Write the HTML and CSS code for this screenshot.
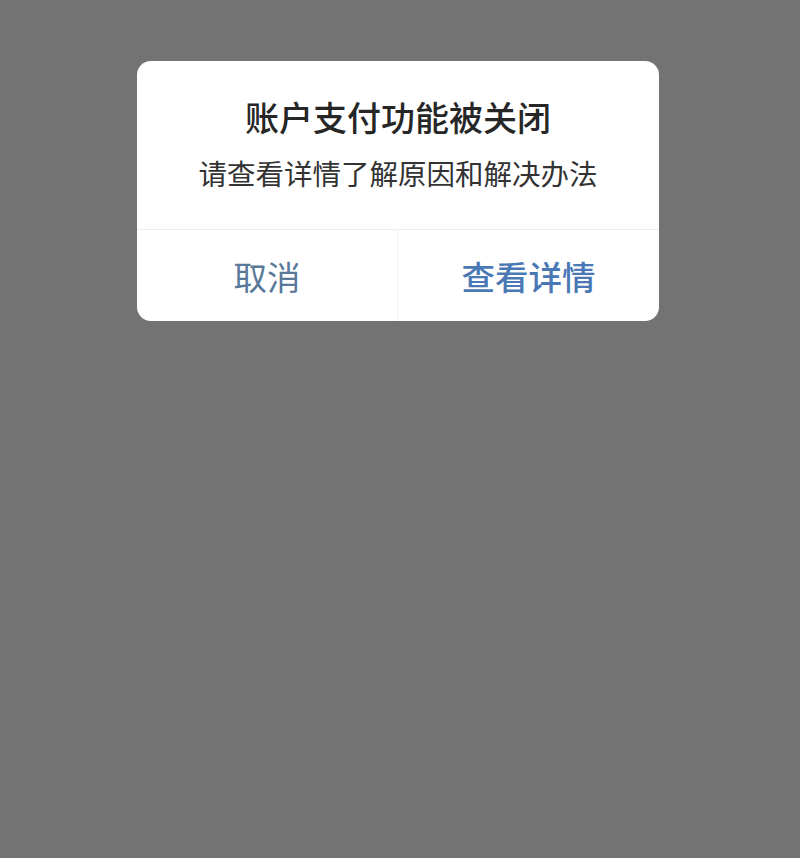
FILE: index.html
```html
<!DOCTYPE html>
<html lang="zh-CN">
<head>
<meta charset="utf-8">
<title>账户支付功能被关闭</title>
<link rel="stylesheet" href="styles.css">
</head>
<body>
<div class="screen">
  <div class="dialog">
    <div class="dialog-body">
      <h1 class="dialog-title">账户支付功能被关闭</h1>
      <p class="dialog-text">请查看详情了解原因和解决办法</p>
    </div>
    <div class="dialog-actions">
      <button class="btn btn-cancel">取消</button>
      <button class="btn btn-primary">查看详情</button>
    </div>
  </div>
</div>
</body>
</html>
```
FILE: styles.css
```css
html, body {
  margin: 0;
  padding: 0;
  background: #737373;
}
body {
  font-family: "Noto Sans CJK SC", "Noto Sans", sans-serif;
}
.screen {
  width: 800px;
  height: 858px;
  display: flex;
  flex-direction: column;
  align-items: center;
  padding-top: 61px;
  box-sizing: border-box;
}
.dialog {
  width: 522px;
  margin-left: -4px;
  background: #ffffff;
  border-radius: 14px;
  overflow: hidden;
}
.dialog-body {
  padding: 34px 20px 38px;
  display: flex;
  flex-direction: column;
  align-items: center;
  border-bottom: 1px solid #eeeeee;
}
.dialog-title {
  margin: 0;
  font-size: 34px;
  line-height: 44px;
  font-weight: 500;
  color: #262626;
}
.dialog-text {
  margin: 16px 0 0;
  font-size: 28.5px;
  line-height: 36px;
  font-weight: 400;
  color: #333333;
}
.dialog-actions {
  display: grid;
  grid-template-columns: 1fr 1fr;
  height: 91px;
}
.btn {
  border: none;
  background: transparent;
  font-family: inherit;
  font-size: 33.5px;
  line-height: 40px;
  padding: 0;
  margin: 0;
}
.btn-cancel {
  color: #5a7899;
  font-weight: 400;
  border-right: 1px solid #f0f0f0;
}
.btn-primary {
  color: #4a78b4;
  font-weight: 500;
}
```
